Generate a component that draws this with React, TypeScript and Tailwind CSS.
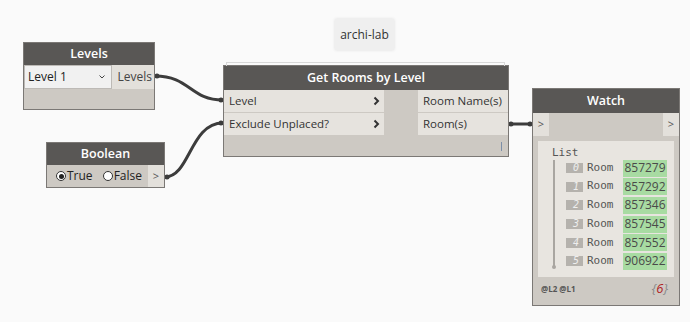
import React from "react";

const HEAD = "bg-[#595755] text-white text-[12.5px] font-semibold flex items-center justify-center";

function Chevron() {
  return (
    <svg width="7" height="10" viewBox="0 0 7 10" fill="none">
      <path d="M1.5 1.5 L5 5 L1.5 8.5" stroke="#333" strokeWidth="2" />
    </svg>
  );
}

function Levels() {
  return (
    <div className="absolute left-[23px] top-[42px] w-[132px] h-[68px] bg-[#cdc9c3] border border-[#7b7875] flex flex-col">
      <div className={`${HEAD} h-[22px]`}>Levels</div>
      <div className="flex h-[24px]">
        <div className="w-[88px] bg-[#f1f1f1] border border-[#bdbab6] flex items-center justify-between px-[3px] text-[12px] text-[#222]">
          <span>Level 1</span>
          <svg width="6" height="4" viewBox="0 0 6 4" fill="none" className="mr-[3px]">
            <path d="M0.5 0.5 L3 3 L5.5 0.5" stroke="#444" strokeWidth="1" />
          </svg>
        </div>
        <div className="flex-1 bg-[#e3e0db] flex items-center justify-end pr-[2px] text-[12px] text-[#444]">Levels</div>
      </div>
    </div>
  );
}

function Radio({ on, label }: { on?: boolean; label: string }) {
  return (
    <div className="flex items-center gap-[1px]">
      <span className="w-[10px] h-[10px] rounded-full border border-[#333] bg-white flex items-center justify-center">
        {on && <span className="w-[5px] h-[5px] rounded-full bg-[#222]" />}
      </span>
      <span>{label}</span>
    </div>
  );
}

function BooleanNode() {
  return (
    <div className="absolute left-[46px] top-[142px] w-[119px] h-[46px] bg-[#cdc9c3] border border-[#7b7875] flex flex-col">
      <div className={`${HEAD} h-[22px]`}>Boolean</div>
      <div className="flex flex-1 text-[12px] text-[#222]">
        <div className="flex-1 flex items-center gap-[10px] pl-[9px]">
          <Radio on label="True" />
          <Radio label="False" />
        </div>
        <div className="w-[16px] bg-[#e3e0db] flex items-center justify-center text-[11px] text-[#555]">&gt;</div>
      </div>
    </div>
  );
}

function GetRooms() {
  const row = "h-[22px] bg-[#e6e3de] flex items-center text-[11.5px] text-[#333] whitespace-nowrap";
  return (
    <div className="absolute left-[223px] top-[65px] w-[286px] h-[92px] bg-[#cdc9c3] border border-[#7b7875] flex flex-col">
      <div className="absolute -top-[4px] left-[2px] right-[3px] h-[4px] border-t border-l border-r border-[#d8d8d8]" />
      <div className={`${HEAD} h-[24px]`}>Get Rooms by Level</div>
      <div className="flex">
        <div className="w-[160px] flex flex-col gap-[1px]">
          <div className={`${row} justify-between pl-[5px] pr-[4px]`}>
            <span>Level</span>
            <Chevron />
          </div>
          <div className={`${row} justify-between pl-[5px] pr-[4px]`}>
            <span>Exclude Unplaced?</span>
            <Chevron />
          </div>
        </div>
        <div className="w-[34px]" />
        <div className="flex-1 flex flex-col gap-[1px]">
          <div className={`${row} px-[5px]`}>Room Name(s)</div>
          <div className={`${row} px-[5px]`}>Room(s)</div>
        </div>
      </div>
      <div className="flex-1 flex items-end justify-end pr-[6px] pb-[5px]">
        <span className="w-[1px] h-[9px] bg-[#7d8fa8]" />
      </div>
    </div>
  );
}

const rooms = ["857279", "857292", "857346", "857545", "857552", "906922"];

function Watch() {
  return (
    <div className="absolute left-[532px] top-[88px] w-[148px] h-[218px] bg-[#cdc9c3] border border-[#7b7875] flex flex-col">
      <div className={`${HEAD} h-[24px]`}>Watch</div>
      <div className="flex h-[23px] text-[11px] text-[#555]">
        <div className="w-[16px] bg-[#e3e0db] flex items-center justify-center">&gt;</div>
        <div className="flex-1" />
        <div className="w-[16px] bg-[#e3e0db] flex items-center justify-center">&gt;</div>
      </div>
      <div className="mx-[5px] mt-[5px] h-[136px] bg-[#e8e5e0] font-['DejaVu_Sans_Mono',monospace] text-[11px] text-[#555] pt-[5px] pl-[14px]">
        <div className="leading-[14px]">List</div>
        <div className="flex">
          <div className="relative w-[14px] h-[111px]">
            <div className="absolute left-[1px] top-[0px] w-[2px] h-[108px] bg-[#a9a6a1]" />
            <div className="absolute left-0 bottom-[2px] w-[4px] h-[4px] rounded-full bg-[#a9a6a1]" />
          </div>
          <div className="flex flex-col gap-[2.7px] pt-[0px]">
            {rooms.map((r, i) => (
              <div key={r} className="flex items-center h-[16px]">
                <span className="w-[17px] h-[10px] bg-[#b5b2ad] text-[#eee] italic text-[10px] leading-[10px] text-right pr-[4px]">{i}</span>
                <span className="ml-[4px] w-[34px]">Room</span>
                <span className="ml-[2px] w-[44px] h-[17px] bg-[#a8dba2] flex items-center justify-center font-['Open_Sans',sans-serif] text-[12px] text-[#4a4a4a]">{r}</span>
              </div>
            ))}
          </div>
        </div>
      </div>
      <div className="mx-[5px] h-[23px] flex items-center justify-between px-[3px]">
        <span className="text-[8px] font-bold text-[#555]">@L2 @L1</span>
        <span className="italic text-[13px] text-[#8a8a8a] pr-[3px]">{"{"}<span className="text-[#b01d1d]">6</span>{"}"}</span>
      </div>
    </div>
  );
}

function Wires() {
  return (
    <svg className="absolute inset-0" width="690" height="322" fill="none">
      <g stroke="#3c3c3c" strokeWidth="3">
        <path d="M155 76 C190 76 190 100 223 100" />
        <path d="M165 177 C190 177 190 123 223 123" />
        <path d="M509 124 L532 124" />
      </g>
      <g fill="#3c3c3c">
        <circle cx="157" cy="76" r="2.5" />
        <circle cx="221" cy="100" r="2.5" />
        <circle cx="167" cy="177" r="2.5" />
        <circle cx="221" cy="123" r="2.5" />
        <circle cx="511" cy="124" r="2.5" />
        <circle cx="530" cy="124" r="2.5" />
      </g>
    </svg>
  );
}

export default function App() {
  return (
    <div className="relative w-[690px] h-[322px] bg-[#fafafa] overflow-hidden font-['Open_Sans',sans-serif]">
      <div className="absolute left-[335px] top-[19px] w-[59px] h-[31px] bg-[#efefef] shadow-[0_0_3px_rgba(0,0,0,0.12)] flex items-center justify-center text-[12px] text-[#333]">
        archi-lab
      </div>
      <Wires />
      <Levels />
      <BooleanNode />
      <GetRooms />
      <Watch />
    </div>
  );
}
